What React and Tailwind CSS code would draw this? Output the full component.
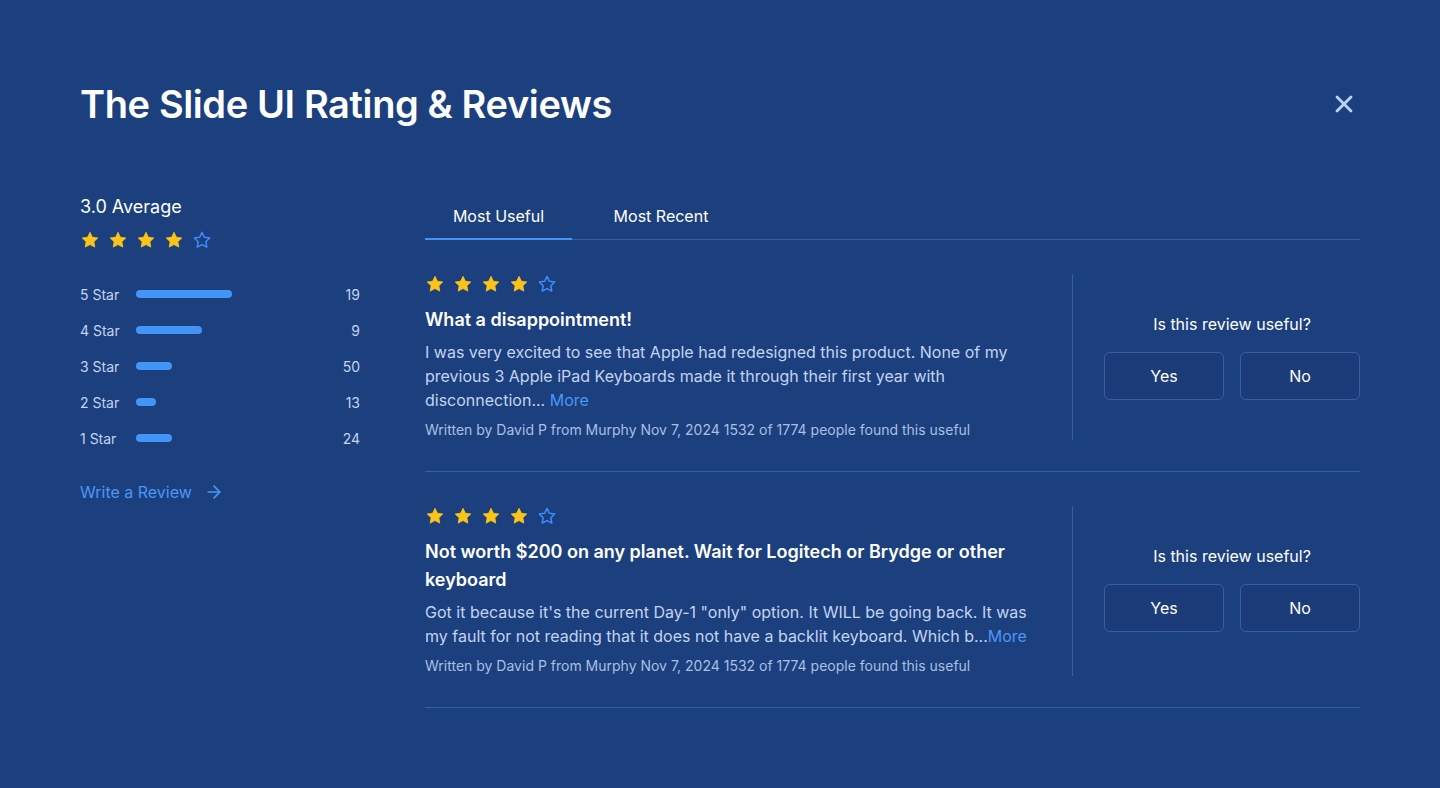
import React, { useState } from 'react';
import { X, ArrowRight } from 'lucide-react';

const BREAKDOWN = [
  { label: '5 Star', width: 96, count: 19 },
  { label: '4 Star', width: 66, count: 9 },
  { label: '3 Star', width: 36, count: 50 },
  { label: '2 Star', width: 20, count: 13 },
  { label: '1 Star', width: 36, count: 24 },
];

const REVIEWS = [
  {
    id: 1,
    rating: 4,
    title: 'What a disappointment!',
    body: 'I was very excited to see that Apple had redesigned this product. None of my previous 3 Apple iPad Keyboards made it through their first year with disconnection... ',
    meta: 'Written by David P from Murphy Nov 7, 2024 1532 of 1774 people found this useful',
  },
  {
    id: 2,
    rating: 4,
    title: 'Not worth $200 on any planet. Wait for Logitech or Brydge or other keyboard',
    body: 'Got it because it\'s the current Day-1 "only" option. It WILL be going back. It was my fault for not reading that it does not have a backlit keyboard. Which b...',
    meta: 'Written by David P from Murphy Nov 7, 2024 1532 of 1774 people found this useful',
  },
];

function Star({ filled }) {
  return (
    <svg width="20" height="20" viewBox="0 0 24 24" className="shrink-0">
      <path
        d="M12 2.8l2.85 5.9 6.45.9-4.7 4.5 1.15 6.4L12 17.45 6.25 20.5l1.15-6.4-4.7-4.5 6.45-.9z"
        fill={filled ? '#fcc419' : 'none'}
        stroke={filled ? '#fcc419' : '#3d8bfd'}
        strokeWidth={filled ? 1 : 1.8}
        strokeLinejoin="round"
      />
    </svg>
  );
}

function Stars({ value }) {
  return (
    <div className="flex items-center gap-2">
      {[1, 2, 3, 4, 5].map((i) => (
        <Star key={i} filled={i <= value} />
      ))}
    </div>
  );
}

export default function App() {
  const [tab, setTab] = useState('useful');

  return (
    <div
      className="min-h-[788px] w-full bg-[#1c3f7e] px-20 pt-[78px] pb-20 text-white"
      style={{ fontFamily: 'Inter, "Noto Sans", sans-serif' }}
    >
      <div className="flex items-center justify-between">
        <h1 className="text-[38px] font-semibold leading-[52px] tracking-[-0.01em]">The Slide UI Rating &amp; Reviews</h1>
        <button className="mr-[2px] text-[#b9d4fb]">
          <X size={28} strokeWidth={2.4} />
        </button>
      </div>

      <div className="mt-[64px] flex">
        <div className="w-[280px] shrink-0">
          <p className="text-[18px] leading-[26px] text-white">3.0 Average</p>
          <div className="mt-[10px]">
            <Stars value={4} />
          </div>

          <div className="mt-[34px] flex flex-col gap-[16px]">
            {BREAKDOWN.map((row) => (
              <div key={row.label} className="flex h-[20px] items-center text-[14px] text-[#c3d4f1]">
                <span className="w-[56px]">{row.label}</span>
                <div className="h-[8px] rounded-full bg-[#4394f7]" style={{ width: row.width }} />
                <span className="ml-auto">{row.count}</span>
              </div>
            ))}
          </div>

          <a className="mt-[32px] flex items-center gap-3 text-[16px] leading-[24px] text-[#4b97f5]" href="#">
            Write a Review
            <ArrowRight size={20} strokeWidth={2} />
          </a>
        </div>

        <div className="ml-[65px] flex-1">
          <div className="flex border-b border-[#3361a8]">
            <button
              onClick={() => setTab('useful')}
              className={`-mb-px w-[147px] border-b-2 pb-[10px] pt-[10px] text-[16px] leading-[24px] ${
                tab === 'useful' ? 'border-[#4394f7] text-white' : 'border-transparent text-white'
              }`}
            >
              Most Useful
            </button>
            <button
              onClick={() => setTab('recent')}
              className={`-mb-px w-[178px] border-b-2 pb-[10px] pt-[10px] text-[16px] leading-[24px] ${
                tab === 'recent' ? 'border-[#4394f7] text-white' : 'border-transparent text-white'
              }`}
            >
              Most Recent
            </button>
          </div>

          {REVIEWS.map((r) => (
            <div key={r.id} className="flex border-b border-[#3361a8] pb-[31px] pt-[34px]">
              <div className="flex-1 pr-8">
                <Stars value={r.rating} />
                <h3 className="mt-[12px] text-[18px] font-semibold leading-[28px] text-white">{r.title}</h3>
                <p className="mt-[6px] text-[16px] leading-[24px] text-[#c3d4f1]">
                  {r.body}
                  <span className="text-[#4b97f5]">More</span>
                </p>
                <p className="mt-[8px] text-[14px] leading-[20px] text-[#a9bfe3]">{r.meta}</p>
              </div>
              <div className="flex w-[288px] shrink-0 flex-col items-center border-l border-[#3361a8] pl-[31px]">
                <p className="mt-[39px] text-[16px] leading-[22px] text-white">Is this review useful?</p>
                <div className="mt-[17px] flex gap-4">
                  <button className="h-[48px] w-[120px] rounded-[6px] border border-[#3361a8] bg-[#1b3c79] text-[16px] text-white">
                    Yes
                  </button>
                  <button className="h-[48px] w-[120px] rounded-[6px] border border-[#3361a8] bg-[#1b3c79] text-[16px] text-white">
                    No
                  </button>
                </div>
              </div>
            </div>
          ))}
        </div>
      </div>
    </div>
  );
}
